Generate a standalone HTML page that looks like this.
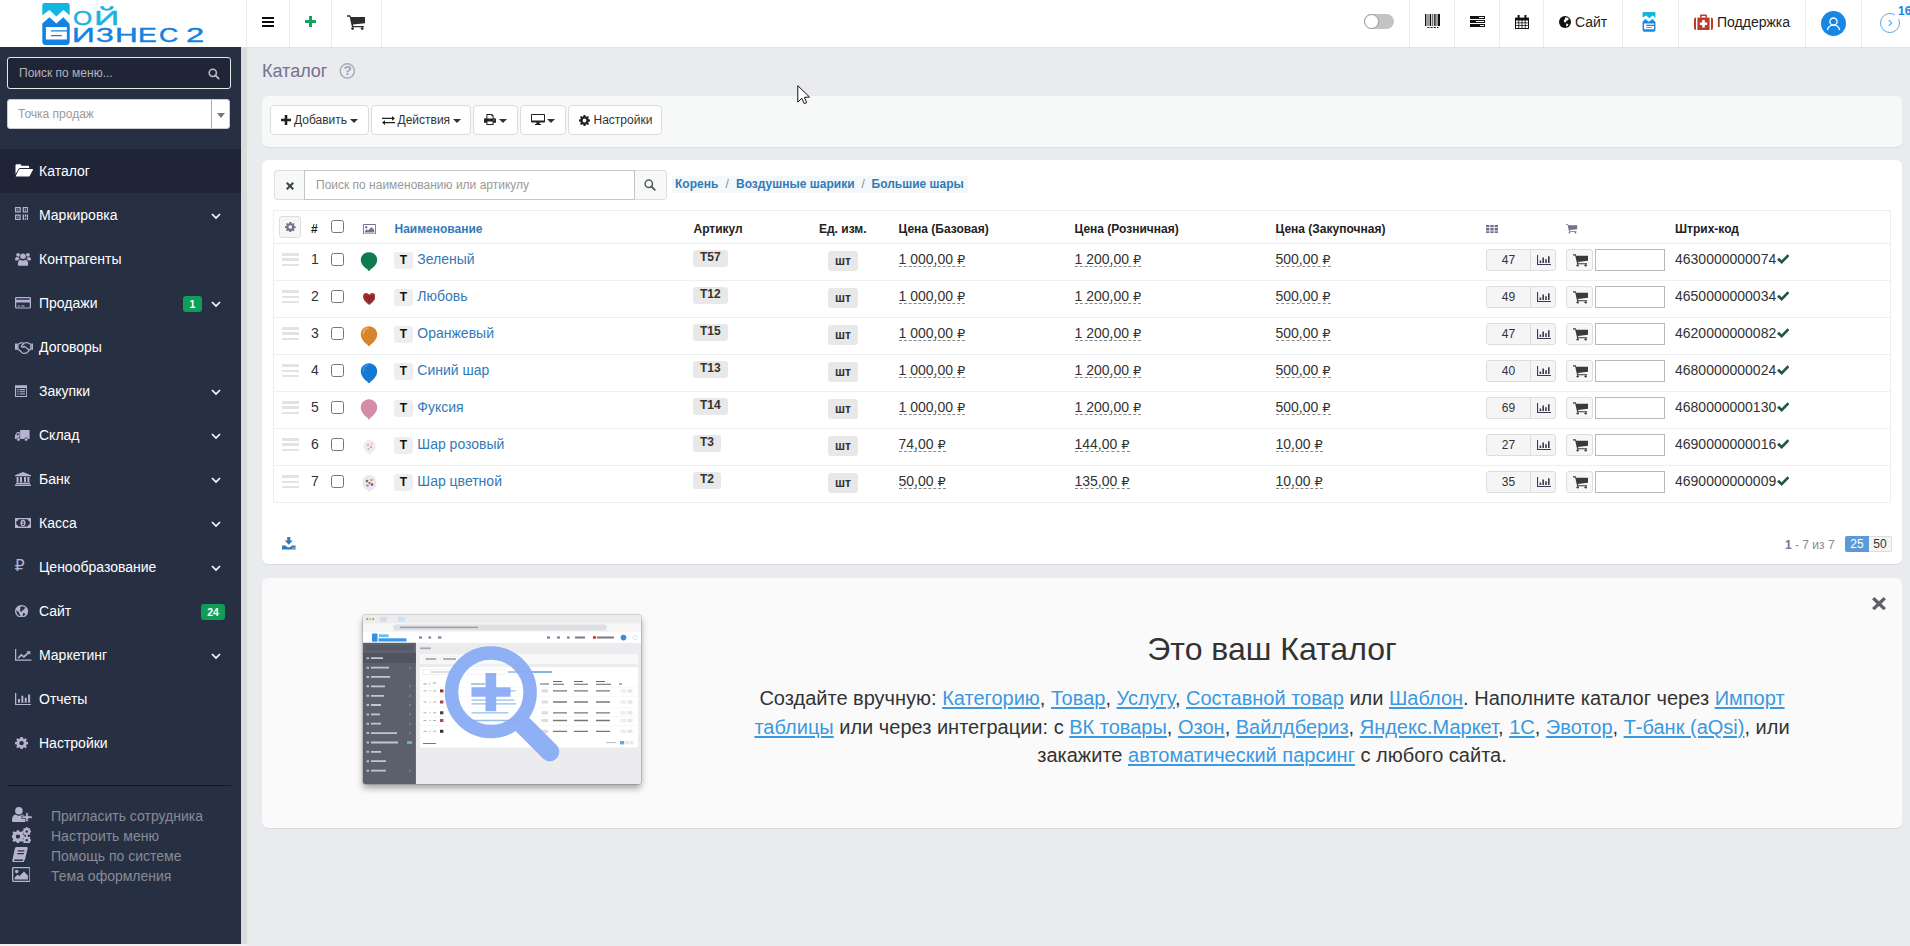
<!DOCTYPE html>
<html lang="ru">
<head>
<meta charset="utf-8">
<title>Каталог</title>
<style>
*{box-sizing:border-box;margin:0;padding:0}
html,body{width:1910px;height:946px;overflow:hidden}
body{font-family:"Liberation Sans",Arial,sans-serif;font-size:14px;color:#333;background:#e9ebee;position:relative}
a{color:#337ab7;text-decoration:none}
.abs{position:absolute}
svg{display:block}

/* ---------- top bar ---------- */
#topbar{position:absolute;left:0;top:0;width:1910px;height:48px;background:#fff;border-bottom:1px solid #e2e3e5}
.tdiv{position:absolute;top:0;width:1px;height:47px;background:#ebebeb}
.ttext{position:absolute;top:13px;font-size:14px;color:#222;line-height:18px;white-space:nowrap}

.lg{font-size:20px;line-height:24px;white-space:nowrap;transform-origin:0 0}
.lg{-webkit-text-stroke:0.4px currentColor}
.l1{top:5.7px;font-size:21px;color:#19b3e1}
.l2{top:23px;font-size:19.5px;color:#1482e0}
/* ---------- sidebar ---------- */
#sidebar{position:absolute;left:0;top:47px;width:241px;height:897px;background:#272f43}
#sbstrip{position:absolute;left:241px;top:47px;width:6px;height:899px;background:#dcdcdc}
#sbbottom{position:absolute;left:0;top:944px;width:247px;height:2px;background:#f0f0f0}
#msearch{position:absolute;left:7px;top:10px;width:224px;height:32px;border:1px solid #e8e9ec;border-radius:3px;background:#1f2437;color:#b3b5bd;font-size:12px;line-height:30px;padding-left:11px}
#msel{position:absolute;left:7px;top:52px;width:223px;height:30px;border:1px solid #ccc;border-radius:3px;background:#fff;color:#9a9a9a;font-size:12px;line-height:28px;padding-left:10px}
#msel i{position:absolute;left:203px;top:0;width:1px;height:28px;background:#aaa}
#msel b{position:absolute;left:209px;top:13px;border:4px solid transparent;border-top:5px solid #777;border-bottom:0}
.mi{position:absolute;left:0;width:241px;height:44px;color:#fff;font-size:14px;line-height:44px;padding-left:39px;white-space:nowrap}
.rub{font-family:"DejaVu Sans",sans-serif}
.mi.act{background:#1f2437}
.mi svg{position:absolute;left:13px;top:14px}
.mi .chev{position:absolute;left:210.5px;top:19.5px}
.badge{position:absolute;top:15px;height:16px;border-radius:3px;background:#119d57;color:#fff;font-size:10.5px;font-weight:bold;line-height:16px;text-align:center}
#sbhr{position:absolute;left:7px;top:738px;width:224px;height:1px;background:#141824}
.bl{position:absolute;left:51px;color:#888b94;font-size:14px;line-height:20px;white-space:nowrap}
.bli{position:absolute;left:12px}

/* ---------- main ---------- */
#title{position:absolute;left:262px;top:60px;font-size:18px;line-height:22px;color:#77718f}
.panel{position:absolute;left:262px;width:1640px;border-radius:6px}
#p1{top:96.400px;height:51px;background:#f7f9f9;box-shadow:0 1px 1px rgba(0,0,0,.07)}
#p2{top:160.200px;height:403.800px;background:#fff;box-shadow:0 1px 1px rgba(0,0,0,.07)}
#p3{top:577.700px;height:250.600px;background:#fafafa;box-shadow:0 1px 1px rgba(0,0,0,.07)}
.btn{position:absolute;top:105px;height:30px;border:1px solid #dcdcdc;border-radius:4px;background:#fff;color:#333;font-size:12px;line-height:28px;white-space:nowrap}
.caret{position:absolute;top:13px;border:4px solid transparent;border-top:4px solid #333;border-bottom:0}

.bc{background:#f3f8fb;font-size:12px;font-weight:bold;line-height:17px}
.bc a,.bc span{position:absolute;top:0;white-space:nowrap}
.bc span{color:#8a8a8a;font-weight:normal}
.th{position:absolute;top:221px;font-size:12px;font-weight:bold;line-height:16px;color:#222;white-space:nowrap}
.td{position:absolute;font-size:14px;line-height:20px;color:#333;white-space:nowrap}
a.td{color:#337ab7}
.cb{position:absolute;left:331px;width:13px;height:13px;border:1px solid #767676;border-radius:2.500px;background:#fff}
.dh{left:282px;width:17px;height:14px;background:linear-gradient(#e1e3e6 0,#e1e3e6 2.600px,transparent 2.600px,transparent 5.500px,#e1e3e6 5.500px,#e1e3e6 8.200px,transparent 8.200px,transparent 10.800px,#e1e3e6 10.800px,#e1e3e6 13.400px,transparent 13.400px)}
.tb{width:19px;height:17px;border-radius:3px;background:#eee;color:#111;font-size:12px;font-weight:bold;line-height:17px;text-align:center}
.lb{height:17px;padding:0 7px;border-radius:3px;background:#e8e8e8;color:#333;font-size:12px;font-weight:bold;line-height:15px;white-space:nowrap}
.lb.u{height:20px;line-height:20px;padding:0 7px}
.pr{border-bottom:1px dashed #888;height:18px;line-height:20px}
.pr .rub{font-size:13px}
.sg{left:1486px;width:70px;height:22px;border:1px solid #ddd;border-radius:3px;background:#f5f5f5}
.sg b{position:absolute;left:0;top:0;width:44px;height:20px;border-right:1px solid #ddd;font-weight:normal;font-size:12px;line-height:20px;text-align:center;color:#333}
.sg svg{position:absolute;left:50px;top:5px}
.cbn{left:1566px;width:26.500px;height:22px;border:1px solid #ddd;border-radius:3px;background:#f7f7f7}
.cbn svg{position:absolute;left:5.500px;top:4px}
.qi{left:1595px;width:70px;height:22px;border:1px solid #b8b8b8;background:#fff}
#thumb{box-shadow:0 4px 7px rgba(0,0,0,.36),0 0 0 .5px rgba(0,0,0,.25);border-radius:2px}
#ptxt{text-align:center;font-size:20px;line-height:28.570px;color:#333;white-space:nowrap}
#ptxt a{color:#3b99e0;text-decoration:underline;text-decoration-thickness:1.500px;text-underline-offset:2px}
</style>
</head>
<body>

<div id="topbar">
  <!-- logo -->
  <svg class="abs" style="left:42px;top:3px" width="28" height="42" viewBox="0 0 28 42">
    <path d="M0.3 2 Q0.3 0 2.3 0 H25.7 Q27.7 0 27.7 2 V12.2 L21.4 6.9 L14.3 13.5 L7.4 6.9 L0.3 12.2 Z" fill="#14b5e1"/>
    <path d="M0.3 20.6 L7.4 14.3 L14.3 20.4 L21.4 14.3 L27.7 20.9 V38.4 Q27.7 41.9 24.2 41.9 H3.8 Q0.3 41.9 0.3 38.4 Z" fill="#1482e0"/>
    <path d="M3.9 23.9 H24.9 V27.2 H8.9 V28.5 H24.9 V36.6 H3.9 Z M8.9 32 V33.3 H19.9 V32 Z" fill="#fff" fill-rule="evenodd"/>
  </svg>
  <div class="abs lg l1" style="left:72.6px;transform:scaleX(1.179)">О</div><div class="abs lg l1" style="left:94.2px;transform:scaleX(1.678)">Й</div>
  <div class="abs lg l2" style="left:71.8px;transform:scaleX(1.618)">И</div><div class="abs lg l2" style="left:95.9px;transform:scaleX(1.508)">З</div><div class="abs lg l2" style="left:115.1px;transform:scaleX(1.613)">Н</div><div class="abs lg l2" style="left:138.4px;transform:scaleX(1.444)">Е</div><div class="abs lg l2" style="left:158.7px;transform:scaleX(1.368)">С</div><div class="abs lg l2" style="left:185.8px;transform:scaleX(1.675)">2</div>

  <i class="tdiv" style="left:246px"></i><i class="tdiv" style="left:289px"></i><i class="tdiv" style="left:331px"></i><i class="tdiv" style="left:381px"></i>
  <!-- hamburger -->
  <svg class="abs" style="left:262px;top:16px" width="12" height="12" viewBox="0 0 12 12"><path d="M0 1h12v2H0zM0 5h12v2H0zM0 9h12v2H0z" fill="#0a0a0a"/></svg>
  <!-- plus -->
  <svg class="abs" style="left:305px;top:16px" width="11" height="11" viewBox="0 0 11 11"><path d="M4 0h3v4h4v3H7v4H4V7H0V4h4z" fill="#12a45c"/></svg>
  <!-- cart -->
  <svg class="abs" style="left:347px;top:15px" width="18" height="15" viewBox="0 0 18 15"><path d="M0 0.3h3.2l0.8 1.7h14v6.2l-12 1.4 0.3 1.4h10.5v1.3H5l-2.4-10.6H0z" fill="#2d2d2d"/><circle cx="5.6" cy="13.6" r="1.4" fill="#2d2d2d"/><circle cx="15.2" cy="13.6" r="1.4" fill="#2d2d2d"/></svg>

  <!-- toggle -->
  <div class="abs" style="left:1364px;top:14px;width:30px;height:15px;border-radius:8px;background:#c4c3c2"></div>
  <div class="abs" style="left:1364px;top:14px;width:15px;height:15px;border-radius:8px;background:#fff;border:1px solid #999"></div>

  <i class="tdiv" style="left:1409px"></i><i class="tdiv" style="left:1454px"></i><i class="tdiv" style="left:1499px"></i><i class="tdiv" style="left:1543px"></i><i class="tdiv" style="left:1622px"></i><i class="tdiv" style="left:1678px"></i><i class="tdiv" style="left:1805px"></i><i class="tdiv" style="left:1861px"></i>

  <!-- barcode -->
  <svg class="abs" style="left:1425px;top:14px" width="15" height="14" viewBox="0 0 15 14"><path d="M0 0h1.4v12H0zM2.6 0h0.8v12h-0.8zM4.6 0h1.6v12H4.6zM7.4 0h0.8v12h-0.8zM9.2 0h1.4v12H9.2zM11.6 0h0.8v12h-0.8zM13 0h2v12h-2zM2.4 13h2v1h-2zM5.6 13h2v1h-2zM8.8 13h2v1h-2zM12 13h1.4v1H12z" fill="#111"/></svg>
  <!-- tasks -->
  <svg class="abs" style="left:1470px;top:16px" width="15" height="11" viewBox="0 0 15 11"><path d="M0 0h15v3H0zM0 4h15v3H0zM0 8h15v3H0z" fill="#111"/><path d="M9 1h5v1H9zM6 5h8v1H6zM10 9h4v1h-4z" fill="#fff"/></svg>
  <!-- calendar -->
  <svg class="abs" style="left:1515px;top:15px" width="14" height="14" viewBox="0 0 14 14"><path d="M0 2.6h14v11.4H0z" fill="#111"/><path d="M2.6 0h2v3.6h-2zM9.4 0h2v3.6h-2z" fill="#111"/><path d="M1 5.4h2.4v2H1zM4.2 5.4h2.4v2H4.2zM7.4 5.4h2.4v2H7.4zM10.6 5.4H13v2h-2.4zM1 8.2h2.4v2H1zM4.2 8.2h2.4v2H4.2zM7.4 8.2h2.4v2H7.4zM10.6 8.2H13v2h-2.4zM1 11h2.4v2H1zM4.2 11h2.4v2H4.2zM7.4 11h2.4v2H7.4zM10.6 11H13v2h-2.4z" fill="#fff"/></svg>
  <!-- globe -->
  <svg class="abs" style="left:1559px;top:16px" width="12" height="12" viewBox="0 0 12 12"><circle cx="6" cy="6" r="6" fill="#111"/><path d="M6.4 1.2c1.6 0 3 .8 3.8 2l-1 .2-.6 1.2-1.4.4-.4 1.6-1.4-.4-.6-1.4.8-1.4zM7.4 7.6l2 .4-.6 1.8-1.8.8z" fill="#fff"/></svg>
  <div class="ttext" style="left:1575px">Сайт</div>
  <!-- mini logo -->
  <svg class="abs" style="left:1642px;top:12px" width="14" height="20" viewBox="0 0 28 42">
    <path d="M0.5 2.2 Q0.5 0.2 2.5 0.2 H25.5 Q27.5 0.2 27.5 2.2 V12.3 L21.8 7.6 L14.6 13.2 L8.2 7.2 L0.5 11.6 Z" fill="#14b5e1"/>
    <path d="M0.5 20.5 L6.6 14.6 L13.6 20.6 L21.2 14.6 L27.5 20.8 V38 Q27.5 41.4 24 41.4 H4 Q0.5 41.4 0.5 38 Z" fill="#1687e4"/>
    <path d="M3.6 24.2 H24.4 V27 H8 V29.6 H24.4 V36.2 H3.6 Z M8 32.2 V33.6 H20 V32.2 Z" fill="#fff" fill-rule="evenodd"/>
  </svg>
  <!-- medkit -->
  <svg class="abs" style="left:1694px;top:14px" width="19" height="16" viewBox="0 0 19 16"><path d="M0 5.4Q0 3.6 1.8 3.6H2v12.4H1.8Q0 16 0 14.2zM3.4 3.6h12.2V16H3.4zM17 3.6h.2q1.800 0 1.800 1.800v8.800q0 1.800-1.800 1.800H17z" fill="#c0392b"/><path d="M6 3.6V1.600Q6 .4 7.200.4h4.600q1.200 0 1.200 1.200v2h-1.600V2H7.600v1.600z" fill="#c0392b"/><path d="M8.200 6h2.600v2.400h2.400V11h-2.400v2.400H8.200V11H5.800V8.400h2.400z" fill="#fff"/></svg>
  <div class="ttext" style="left:1717px">Поддержка</div>
  <!-- user -->
  <div class="abs" style="left:1821px;top:11px;width:25px;height:25px;border-radius:13px;background:#1687e4"></div>
  <svg class="abs" style="left:1821px;top:11px" width="25" height="25" viewBox="0 0 25 25"><circle cx="12.5" cy="10.600" r="3.600" fill="none" stroke="#fff" stroke-width="1.300"/><path d="M6.400 19.200c.6-3 2.800-5 6.100-5s5.500 2 6.100 5" fill="none" stroke="#fff" stroke-width="1.300"/></svg>
  <!-- circle arrow -->
  <svg class="abs" style="left:1879px;top:12px" width="22" height="22" viewBox="0 0 22 22"><circle cx="11" cy="11" r="9.500" fill="none" stroke="#5aa8ea" stroke-width="1"/><path d="M9.800 8.200l2.800 2.800-2.800 2.800" fill="none" stroke="#5aa8ea" stroke-width="1.100"/></svg>
  <div class="abs" style="left:1895px;top:1px;width:15px;height:18px;background:#fff"></div>
  <div class="abs" style="left:1898px;top:4px;font-size:12px;font-weight:bold;color:#1687e4;line-height:14px">16</div>
</div>

<div id="sidebar">
  <div id="msearch">Поиск по меню...<svg class="abs" style="left:199.500px;top:9.500px" width="12" height="12" viewBox="0 0 12 12"><circle cx="4.800" cy="4.800" r="3.600" fill="none" stroke="#b9bbc4" stroke-width="1.600"/><path d="M7.400 7.400l3.300 3.300" stroke="#b9bbc4" stroke-width="1.800" stroke-linecap="round"/></svg></div>
  <div id="msel">Точка продаж<i></i><b></b></div>
  <div class="mi act" style="top:102px"><svg preserveAspectRatio="none" style="left:14.5px;top:15px" width="18.5" height="13.2" viewBox="0 0 19 14"><path d="M0.5 11V1.500Q0.500.3 1.700.3H5.400Q6.400.3 6.400 1.300V1.900H13.400Q14.600 1.900 14.600 3.100V4.200H5.200Q4.200 4.200 3.600 5.200Z" fill="#fff"/><path d="M4.900 5.200H18.200Q19 5.200 18.500 6L15.200 12.400Q14.700 13.400 13.600 13.400H1.200Q.4 13.400.9 12.600L4 6Q4.400 5.200 4.900 5.200Z" fill="#fff"/></svg>Каталог</div>
  <div class="mi " style="top:146px"><svg preserveAspectRatio="none" style="left:14.6px;top:14px" width="13.4" height="13" viewBox="0 0 14 14"><path fill-rule="evenodd" d="M0 0h6v6H0zM1.300 1.300v3.400h3.400V1.300zM2.300 2.300h1.400v1.400H2.300zM8 0h6v6H8zM9.300 1.300v3.400h3.400V1.300zM10.300 2.300h1.400v1.400h-1.400zM0 8h6v6H0zM1.300 9.300v3.400h3.400V9.300zM2.300 10.300h1.400v1.400H2.300zM8 8h1.600v6H8zM10.400 8h1.400v2.600h-1.400zM12.400 8H14v6h-1.600zM10.400 12h1.400v2h-1.400z" fill="#b5b3cf"/></svg>Маркировка<svg class="chev" width="10" height="7" viewBox="0 0 10 7"><path d="M1 1l4 4 4-4" fill="none" stroke="#fff" stroke-width="1.600"/></svg></div>
  <div class="mi " style="top:190px"><svg preserveAspectRatio="none" style="left:14.6px;top:15.1px" width="16" height="14" viewBox="0 0 17 15"><circle cx="8.500" cy="4.600" r="3" fill="#b5b3cf"/><circle cx="3.300" cy="3" r="2" fill="#b5b3cf"/><circle cx="13.700" cy="3" r="2" fill="#b5b3cf"/><path d="M3.800 14.600Q3 14.600 3 13.400Q3 8.400 6 8.200Q7.200 9.200 8.500 9.200T11 8.200Q14 8.400 14 13.400Q14 14.600 13.200 14.600Z" fill="#b5b3cf"/><path d="M0 8.400Q0 5.600 1.800 5.400Q2.800 6.200 4.200 5.800Q4.400 6.800 5 7.400Q3.400 7.600 2.800 9H1Q0 9 0 8.400ZM17 8.400Q17 5.600 15.200 5.400Q14.200 6.200 12.800 5.800Q12.600 6.800 12 7.400Q13.600 7.600 14.200 9H16Q17 9 17 8.400Z" fill="#b5b3cf"/></svg>Контрагенты</div>
  <div class="mi " style="top:234px"><svg preserveAspectRatio="none" style="left:14.6px;top:16.1px" width="16" height="11.6" viewBox="0 0 16 13"><path fill-rule="evenodd" d="M1.400 0H14.600Q16 0 16 1.400V11.600Q16 13 14.600 13H1.400Q0 13 0 11.600V1.400Q0 0 1.400 0ZM1.300 1.300V3.200H14.700V1.300ZM1.300 6.200V11.700H14.700V6.200ZM2.600 9.400H5V10.600H2.600ZM6 9.400H9.600V10.600H6Z" fill="#b5b3cf"/></svg>Продажи<span class="badge" style="left:183px;width:19px">1</span><svg class="chev" width="10" height="7" viewBox="0 0 10 7"><path d="M1 1l4 4 4-4" fill="none" stroke="#fff" stroke-width="1.600"/></svg></div>
  <div class="mi " style="top:278px"><svg preserveAspectRatio="none" style="left:14.6px;top:17px" width="18.8" height="12" viewBox="0 0 19 13"><path d="M0 1.600H2.400V8.400H0ZM16.600 1.600H19V8.400H16.600Z" fill="#b5b3cf"/><path d="M3 2.400L5.400 1Q6.400.6 7.400 1L8.800 1.600L10.600.8Q11.600.4 12.600.8L16 2.400V8L14.600 8.400L14 9.800Q13.600 10.600 12.800 10.600L12 11.600Q11.200 12.400 10.400 11.800L9.600 12.400Q8.600 12.800 7.800 12L3.800 8.400H3Z" fill="none" stroke="#b5b3cf" stroke-width="1.300" stroke-linejoin="round"/><path d="M8.800 1.800L6.600 4.200Q6.200 5.200 7.200 5.600Q8.400 5.800 9.400 4.600L14.400 8.600" fill="none" stroke="#b5b3cf" stroke-width="1.300"/></svg>Договоры</div>
  <div class="mi " style="top:322px"><svg preserveAspectRatio="none" style="left:15px;top:16px" width="12.3" height="12" viewBox="0 0 14 14"><path fill-rule="evenodd" d="M0 .4H14V14H0ZM1.300 3.400V12.700H12.700V3.400ZM2.600 4.800H4.200V6H2.600ZM5.200 4.800H11.400V6H5.200ZM2.600 7.400H4.200V8.600H2.600ZM5.200 7.400H11.400V8.600H5.200ZM2.600 10H4.200V11.200H2.600ZM5.200 10H11.400V11.200H5.200Z" fill="#b5b3cf"/></svg>Закупки<svg class="chev" width="10" height="7" viewBox="0 0 10 7"><path d="M1 1l4 4 4-4" fill="none" stroke="#fff" stroke-width="1.600"/></svg></div>
  <div class="mi " style="top:366px"><svg preserveAspectRatio="none" style="left:15px;top:16.6px" width="14.6" height="11.4" viewBox="0 0 16 12"><path d="M5.600 0H15.400Q16 0 16 .6V9.400H5.600ZM0 9.400V5.400L2.200 2.400Q2.600 2 3.200 2H5V9.400ZM1.400 5.400H3.800V3.200H3Z" fill-rule="evenodd" fill="#b5b3cf"/><circle cx="3.800" cy="10" r="1.900" fill="#b5b3cf" stroke="#272f43" stroke-width=".7"/><circle cx="12.200" cy="10" r="1.900" fill="#b5b3cf" stroke="#272f43" stroke-width=".7"/></svg>Склад<svg class="chev" width="10" height="7" viewBox="0 0 10 7"><path d="M1 1l4 4 4-4" fill="none" stroke="#fff" stroke-width="1.600"/></svg></div>
  <div class="mi " style="top:410px"><svg preserveAspectRatio="none" style="left:14.6px;top:14.9px" width="16" height="14" viewBox="0 0 16 15"><path d="M8 0L16 3.400V4.600H0V3.400ZM1.600 5.400H3.600V11H1.600ZM5 5.400H7V11H5ZM9 5.400H11V11H9ZM12.400 5.400H14.400V11H12.400ZM1 11.600H15V12.800H1ZM0 13.400H16V15H0Z" fill="#b5b3cf"/></svg>Банк<svg class="chev" width="10" height="7" viewBox="0 0 10 7"><path d="M1 1l4 4 4-4" fill="none" stroke="#fff" stroke-width="1.600"/></svg></div>
  <div class="mi " style="top:454px"><svg preserveAspectRatio="none" style="left:14.6px;top:17.1px" width="16" height="9.9" viewBox="0 0 16 10"><path fill-rule="evenodd" d="M0 0H16V10H0ZM1.300 3.400V6.600Q3.200 6.800 3.400 8.700H12.600Q12.800 6.800 14.700 6.600V3.400Q12.800 3.200 12.600 1.300H3.400Q3.200 3.200 1.300 3.400ZM8 1.800Q10.600 1.800 10.600 5T8 8.200T5.400 5T8 1.800ZM7.200 3.600V4.200H7.800V6.400H7V7H9.200V6.400H8.600V3.200H8Z" fill="#b5b3cf"/></svg>Касса<svg class="chev" width="10" height="7" viewBox="0 0 10 7"><path d="M1 1l4 4 4-4" fill="none" stroke="#fff" stroke-width="1.600"/></svg></div>
  <div class="mi " style="top:498px"><span class="rub" style="position:absolute;left:14px;top:-1px;left:14.5px;color:#b5b3cf;font-size:16px">₽</span>Ценообразование<svg class="chev" width="10" height="7" viewBox="0 0 10 7"><path d="M1 1l4 4 4-4" fill="none" stroke="#fff" stroke-width="1.600"/></svg></div>
  <div class="mi " style="top:542px"><svg preserveAspectRatio="none" style="left:14.6px;top:15.7px" width="13.1" height="12.7" viewBox="0 0 13 13"><circle cx="6.500" cy="6.500" r="6.500" fill="#b5b3cf"/><path d="M6.800 1.200Q9 1.200 10.600 3L9.600 3.400L9 4.800L7.400 5.200L7 7L5.400 6.600L4.800 5L5.600 3.400L5 2.400ZM8 8.200L10.200 8.600L9.600 10.600L7.600 11.400ZM1.400 5L2.600 6.600L3.800 7L4.200 9L5.400 10.400L5 11.600Q2 10.400 1.400 7.400Z" fill="#272f43"/></svg>Сайт<span class="badge" style="left:201px;width:24px">24</span></div>
  <div class="mi " style="top:586px"><svg preserveAspectRatio="none" style="left:15px;top:16.1px" width="16.5" height="11.7" viewBox="0 0 17 13"><path d="M0 0H1.300V11.700H17V13H0Z" fill="#b5b3cf"/><path d="M2.600 9.600L6.400 5.400L9 7.600L13 3.600L11.600 2.400H15.800V6.400L14.400 5L9.200 10L6.600 7.800L3.800 10.800Z" fill="#b5b3cf"/></svg>Маркетинг<svg class="chev" width="10" height="7" viewBox="0 0 10 7"><path d="M1 1l4 4 4-4" fill="none" stroke="#fff" stroke-width="1.600"/></svg></div>
  <div class="mi " style="top:630px"><svg preserveAspectRatio="none" style="left:14.6px;top:15.7px" width="16.9" height="12.1" viewBox="0 0 17 13"><path d="M0 0H1.300V11.700H17V13H0ZM3 6.400H5V10.600H3ZM6.400 3H8.400V10.600H6.400ZM9.800 5.200H11.800V10.600H9.800ZM13.200 1.600H15.200V10.600H13.200Z" fill="#b5b3cf"/></svg>Отчеты</div>
  <div class="mi " style="top:674px"><svg preserveAspectRatio="none" style="left:14.6px;top:15.9px" width="13.1" height="12.3" viewBox="0 0 14 14"><path fill-rule="evenodd" d="M5.800 0H8.200L8.600 1.800L9.800 2.300L11.400 1.300L12.700 2.600L11.700 4.200L12.200 5.400L14 5.800V8.200L12.200 8.600L11.700 9.800L12.700 11.400L11.400 12.700L9.800 11.700L8.600 12.200L8.200 14H5.800L5.400 12.200L4.200 11.700L2.600 12.700L1.300 11.400L2.300 9.800L1.800 8.600L0 8.200V5.800L1.800 5.400L2.300 4.200L1.300 2.600L2.600 1.300L4.200 2.300L5.400 1.800ZM7 4.600A2.400 2.400 0 1 0 7 9.400A2.400 2.400 0 1 0 7 4.600Z" fill="#b5b3cf"/></svg>Настройки</div>
  <div id="sbhr"></div>
  <svg class="bli" preserveAspectRatio="none" style="left:11.8px;top:760.1px" width="20.2" height="15.2" viewBox="0 0 20.200 15.200"><circle cx="6.900" cy="3.800" r="3.800" fill="#b5b3cf"/><path d="M0 13.600Q0 8.200 3.600 7.600Q5.200 8.800 6.900 8.800T10.200 7.600Q14 8.200 14 13.600Q14 15.200 12.400 15.200H1.600Q0 15.200 0 13.600Z" fill="#b5b3cf"/><path d="M13.700 5.700H16.300V8.900H20.200V11.500H16.300V14.800H13.700V11.500H9.800V8.900H13.700Z" fill="#b5b3cf" stroke="#272f43" stroke-width=".7"/></svg>
  <div class="bl" style="top:759px">Пригласить сотрудника</div>
  <svg class="bli" preserveAspectRatio="none" style="left:11.8px;top:779.6px" width="18.8" height="16.2" viewBox="0 0 18 16"><path fill-rule="evenodd" d="M4.600 3.200H6.800L7.200 4.600L8.200 5L9.500 4.200L11 5.700L10.200 7L10.600 8L12 8.400V10.600L10.600 11L10.200 12L11 13.300L9.500 14.800L8.200 14L7.200 14.400L6.800 15.800H4.600L4.200 14.400L3.200 14L1.900 14.800L.4 13.300L1.200 12L.8 11L-.6 10.600V8.400L.8 8L1.200 7L.4 5.700L1.900 4.200L3.200 5L4.200 4.600ZM5.700 7.400A2.100 2.100 0 1 0 5.700 11.600A2.100 2.100 0 1 0 5.700 7.400Z" fill="#b5b3cf"/><path fill-rule="evenodd" d="M13.400 0H14.800L15 1L15.800 1.400L16.700.9L17.600 1.900L17 2.800L17.300 3.500L18.300 3.800V5.200L17.300 5.400L17 6.200L17.600 7L16.700 8L15.800 7.500L15 7.800L14.800 8.800H13.400L13.200 7.800L12.400 7.500L11.500 8L10.600 7L11.200 6.200L10.900 5.400L9.900 5.200V3.800L10.900 3.500L11.200 2.800L10.600 1.900L11.500.9L12.400 1.400L13.200 1ZM14.100 3.200A1.200 1.200 0 1 0 14.100 5.600A1.200 1.200 0 1 0 14.100 3.200Z" fill="#b5b3cf"/><path fill-rule="evenodd" d="M13.400 8.600H14.800L15 9.600L15.800 10L16.700 9.500L17.600 10.500L17 11.400L17.300 12.100L18.300 12.400V13.800L17.300 14L17 14.800L17.600 15.600L16.700 16.600L15.800 16.100L15 16.400L14.800 17.400H13.400L13.200 16.400L12.400 16.100L11.500 16.600L10.600 15.600L11.200 14.800L10.900 14L9.900 13.800V12.400L10.900 12.100L11.200 11.400L10.600 10.500L11.500 9.500L12.400 10L13.200 9.600ZM14.100 11.800A1.200 1.200 0 1 0 14.100 14.200A1.200 1.200 0 1 0 14.100 11.800Z" fill="#b5b3cf"/></svg>
  <div class="bl" style="top:779px">Настроить меню</div>
  <svg class="bli" preserveAspectRatio="none" style="left:11.8px;top:800px" width="16" height="15.3" viewBox="0 0 17 14"><path fill-rule="evenodd" d="M4.600 0H15.600Q17 0 16.600 1.400L14 11Q13.600 12.400 12.200 12.400H13L12.600 14H2Q0 14 .4 12L3 1.600Q3.400 0 4.600 0ZM6.400 3L6 4.200H13L13.400 3ZM5.800 5.400L5.400 6.600H12.400L12.800 5.400ZM2.400 11.400Q1.800 12.800 3 12.800H11.400L11.800 11.400Z" fill="#b5b3cf"/></svg>
  <div class="bl" style="top:799px">Помощь по системе</div>
  <svg class="bli" preserveAspectRatio="none" style="left:11.8px;top:820px" width="18.6" height="15" viewBox="0 0 18 15"><path fill-rule="evenodd" d="M1.400 0H16.600Q18 0 18 1.400V13.600Q18 15 16.600 15H1.400Q0 15 0 13.600V1.400Q0 0 1.400 0ZM1.300 1.300V13.700H16.700V1.300ZM4.600 2.800A1.700 1.700 0 1 0 4.600 6.200A1.700 1.700 0 1 0 4.600 2.800ZM2.600 12.400V10.400L5.400 7.600L7 9.200L11.600 4.600L15.400 8.400V12.400Z" fill="#b5b3cf"/></svg>
  <div class="bl" style="top:819px">Тема оформления</div>
</div>
<div id="sbstrip"></div>
<div id="sbbottom"></div>

<div id="title">Каталог</div>
<svg class="abs" style="left:339px;top:62.500px" width="16" height="16" viewBox="0 0 16 16"><circle cx="8.300" cy="7.900" r="7.100" fill="none" stroke="#aaa9b5" stroke-width="1.400"/></svg>
<div class="abs" style="left:339.500px;top:62.800px;width:16px;height:16px;text-align:center;font-size:13.500px;line-height:16px;color:#a29fb6;font-weight:bold">?</div>
<div class="panel" id="p1"></div>
<div class="btn" style="left:270px;width:99px"><svg class="abs" style="left:10px;top:8.700px" width="10" height="10" viewBox="0 0 10 10"><path d="M3.700 0h2.600v3.700H10v2.600H6.300V10H3.700V6.300H0V3.700h3.700z" fill="#222"/></svg><span style="position:absolute;left:23px;top:0">Добавить</span><i class="caret" style="left:79px"></i></div>
<div class="btn" style="left:371px;width:100px"><svg class="abs" style="left:10px;top:10px" width="13" height="9" viewBox="0 0 13 9"><path d="M0 1.800H10V0L13 2.400L10 4.800V3H0ZM13 6H3V4.200L0 6.600L3 9V7.200H13Z" fill="#222"/></svg><span style="position:absolute;left:25.500px;top:0">Действия</span><i class="caret" style="left:81px"></i></div>
<div class="btn" style="left:473px;width:45px"><svg class="abs" style="left:10px;top:8px" width="12" height="11" viewBox="0 0 12 11"><path fill-rule="evenodd" d="M2.400 0H8L9.600 1.600V4.200H10.800Q12 4.200 12 5.400V8.800H9.600V11H2.400V8.800H0V5.400Q0 4.200 1.200 4.200H2.400ZM3.400 1V4.600H8.600V2.200H7.400V1ZM3.400 7.400V10H8.600V7.400ZM10 5.400A.5.500 0 1 0 10 6.400A.5.500 0 1 0 10 5.400Z" fill="#222"/></svg><i class="caret" style="left:24.500px"></i></div>
<div class="btn" style="left:520px;width:46px"><svg class="abs" style="left:10px;top:8px" width="14" height="11" viewBox="0 0 14 11"><path fill-rule="evenodd" d="M.8 0H13.200Q14 0 14 .8V7.800Q14 8.600 13.200 8.600H8.400L8.800 10H10V11H4V10H5.200L5.600 8.600H.8Q0 8.600 0 7.800V.8Q0 0 .8 0ZM1 1V6.600H13V1Z" fill="#222"/></svg><i class="caret" style="left:25.500px"></i></div>
<div class="btn" style="left:568px;width:94px"><svg class="abs" style="left:10px;top:9px" width="11" height="11" viewBox="0 0 14 14"><path fill-rule="evenodd" d="M5.8 0H8.2L8.6 1.800L9.800 2.300L11.400 1.300L12.700 2.600L11.700 4.200L12.200 5.400L14 5.800V8.200L12.200 8.600L11.700 9.800L12.700 11.400L11.400 12.700L9.800 11.700L8.600 12.200L8.200 14H5.800L5.400 12.200L4.200 11.700L2.600 12.700L1.300 11.400L2.300 9.800L1.800 8.600L0 8.200V5.800L1.800 5.400L2.300 4.200L1.300 2.600L2.600 1.300L4.200 2.300L5.400 1.800ZM7 4.600A2.400 2.400 0 1 0 7 9.400A2.400 2.400 0 1 0 7 4.600Z" fill="#222"/></svg><span style="position:absolute;left:24.500px;top:0">Настройки</span></div>
<div class="panel" id="p2"></div>
<div class="abs" style="left:274px;top:170px;width:31px;height:30px;border:1px solid #dedede;border-right:0;border-radius:4px 0 0 4px;background:#f7f9f9"></div>
<svg class="abs" style="left:285.500px;top:181.500px" width="8" height="8" viewBox="0 0 8 8"><path d="M1.500 0L4 2.500L6.500 0L8 1.500L5.500 4L8 6.500L6.500 8L4 5.500L1.500 8L0 6.500L2.500 4L0 1.500Z" fill="#444"/></svg>
<div class="abs" style="left:634px;top:170px;width:32.500px;height:30px;border:1px solid #dedede;border-left:0;border-radius:0 4px 4px 0;background:#f7f9f9"></div>
<div class="abs" style="left:304px;top:170px;width:331px;height:30px;border:1px solid #c4c4c4;background:#fff;color:#999;font-size:12px;line-height:28px;padding-left:11px">Поиск по наименованию или артикулу</div>
<svg class="abs" style="left:644px;top:179px" width="12" height="12" viewBox="0 0 12 12"><circle cx="4.800" cy="4.800" r="3.700" fill="none" stroke="#5a5a5a" stroke-width="1.500"/><path d="M7.500 7.500l3.300 3.300" stroke="#5a5a5a" stroke-width="1.800" stroke-linecap="round"/></svg>
<div class="abs bc" style="left:672px;top:176px;width:296px;height:17px"><a style="left:3px">Корень</a><span style="left:53.500px">/</span><a style="left:64px">Воздушные шарики</a><span style="left:189.500px">/</span><a style="left:199.500px">Большие шары</a></div>
<div class="abs" style="left:273px;top:210px;width:1618px;height:293px;border:1px solid #eeeff0"></div>
<div class="abs" style="left:279px;top:216px;width:22px;height:22px;border:1px solid #ddd;border-radius:3px;background:#f5f7f7"></div>
<svg class="abs" style="left:285px;top:221.500px" width="10.600" height="10.200" viewBox="0 0 14 14" preserveAspectRatio="none"><path fill-rule="evenodd" d="M5.8 0H8.2L8.6 1.800L9.800 2.300L11.400 1.300L12.700 2.600L11.700 4.200L12.200 5.400L14 5.800V8.200L12.200 8.600L11.700 9.800L12.700 11.400L11.400 12.700L9.800 11.700L8.600 12.200L8.200 14H5.800L5.400 12.200L4.200 11.700L2.600 12.700L1.300 11.400L2.300 9.800L1.800 8.600L0 8.200V5.800L1.800 5.400L2.300 4.200L1.300 2.600L2.600 1.300L4.200 2.300L5.400 1.800ZM7 4.600A2.400 2.400 0 1 0 7 9.400A2.400 2.400 0 1 0 7 4.600Z" fill="#77718f"/></svg>
<div class="th" style="left:311px">#</div>
<i class="cb" style="top:220px"></i>
<svg class="abs" style="left:363px;top:223.500px" width="13" height="10.500" viewBox="0 0 13 10.500"><path fill-rule="evenodd" d="M.8 0H12.200Q13 0 13 .8V9.700Q13 10.500 12.200 10.500H.8Q0 10.500 0 9.700V.8Q0 0 .8 0ZM.9.900V9.600H12.100V.9ZM3.200 2A1.200 1.200 0 1 0 3.200 4.400A1.200 1.200 0 1 0 3.200 2ZM1.800 8.600V7.200L3.800 5.200L5 6.400L8.400 3L11.200 5.800V8.600Z" fill="#77718f"/></svg>
<div class="th" style="left:394.500px;color:#337ab7">Наименование</div>
<div class="th" style="left:693.500px">Артикул</div>
<div class="th" style="left:819px">Ед. изм.</div>
<div class="th" style="left:898.500px">Цена (Базовая)</div>
<div class="th" style="left:1074.500px">Цена (Розничная)</div>
<div class="th" style="left:1275.500px">Цена (Закупочная)</div>
<svg class="abs" style="left:1486px;top:224.500px" width="12" height="8.500" viewBox="0 0 12 8.500"><path d="M0 0h3.400v2.300H0zM4.300 0h3.400v2.300H4.300zM8.600 0H12v2.300H8.600zM0 3.100h3.400v2.300H0zM4.300 3.100h3.400v2.300H4.300zM8.600 3.100H12v2.300H8.600zM0 6.200h3.400v2.300H0zM4.300 6.200h3.400v2.300H4.300zM8.600 6.200H12v2.300H8.600z" fill="#77718f"/></svg>
<svg class="abs" style="left:1566px;top:224.300px" width="11.500" height="9.500" viewBox="0 0 18.500 15" preserveAspectRatio="none"><path d="M0 .3h3.200l.8 1.700h14v6.200l-12 1.400.3 1.400h10.500v1.300H5L2.600 1.700H0z" fill="#77718f"/><circle cx="5.600" cy="13.600" r="1.400" fill="#77718f"/><circle cx="15.200" cy="13.600" r="1.400" fill="#77718f"/></svg>
<div class="th" style="left:1675px">Штрих-код</div>
<div class="abs" style="left:274px;top:243px;width:1616px;height:1px;background:#e9eaeb"></div>
<!-- row 1 -->
<div class="abs dh" style="top:252.5px"></div>
<div class="td" style="left:311px;top:249px">1</div>
<i class="cb" style="top:253px"></i>
<svg class="abs" preserveAspectRatio="none" style="left:360.100px;top:252px" width="18" height="19" viewBox="0 0 18 20"><path d="M9 .3C13.800.3 17.200 3.800 17.200 8.300C17.200 12.800 12.600 17.300 9.800 18.600L10.400 19.700H7.600L8.200 18.600C5.400 17.300.8 12.800.8 8.300C.8 3.800 4.200.3 9 .3Z" fill="#0e7b50"/></svg>
<div class="abs tb" style="left:394px;top:252px">Т</div>
<a class="td" style="left:417.300px;top:249px">Зеленый</a>
<div class="abs lb" style="left:693px;top:249.5px">T57</div>
<div class="abs lb u" style="left:828px;top:250.8px">шт</div>
<div class="td pr" style="left:898.5px;top:249px">1 000,00 <span class="rub">₽</span></div>
<div class="td pr" style="left:1074.5px;top:249px">1 200,00 <span class="rub">₽</span></div>
<div class="td pr" style="left:1275.5px;top:249px">500,00 <span class="rub">₽</span></div>
<div class="abs sg" style="top:249px"><b>47</b><svg width="14" height="10" viewBox="0 0 14 10"><path d="M0 0H1.100V8.900H14V10H0ZM2.600 5.600H4.200V8H2.600ZM5.400 2.400H7V8H5.400ZM8.200 4.200H9.800V8H8.200ZM11 1.200H12.600V8H11Z" fill="#3a3a50"/></svg></div>
<div class="abs cbn" style="top:249px"><svg width="15.500" height="12.500" viewBox="0 0 18.500 15" preserveAspectRatio="none"><path d="M0 .3h3.200l.8 1.700h14v6.200l-12 1.400.3 1.400h10.500v1.300H5L2.600 1.700H0z" fill="#3a3a3a"/><circle cx="5.600" cy="13.600" r="1.400" fill="#3a3a3a"/><circle cx="15.200" cy="13.600" r="1.400" fill="#3a3a3a"/></svg></div>
<div class="abs qi" style="top:249px"></div>
<div class="td" style="left:1675px;top:249px">4630000000074</div>
<svg class="abs" style="left:1776.500px;top:254.2px" width="12.500" height="10" viewBox="0 0 12.500 10"><path d="M2 3.800L4.700 6.300L10.500 .200L12.500 2.100L4.700 10L0 5.700Z" fill="#1f5a3d"/></svg>
<div class="abs" style="left:274px;top:280px;width:1616px;height:1px;background:#eeeff0"></div>
<!-- row 2 -->
<div class="abs dh" style="top:289.5px"></div>
<div class="td" style="left:311px;top:286px">2</div>
<i class="cb" style="top:290px"></i>
<svg class="abs" style="left:362.800px;top:292.800px" width="12.600" height="12" viewBox="0 0 14.500 13.500" preserveAspectRatio="none"><path d="M7.250 2Q8.400 0 10.800 0Q14.500.4 14.500 4.200Q14.500 8.400 7.250 13.500Q0 8.400 0 4.200Q0 .4 3.700 0Q6.100 0 7.250 2Z" fill="#a5322b"/><path d="M7.250 4Q8.200 2.600 10.400 2.600Q12.400 3 12.200 5Q11.600 8 7.250 11Q2.900 8 2.300 5Q2.100 3 4.100 2.600Q6.300 2.600 7.250 4Z" fill="#8c2a31"/></svg>
<div class="abs tb" style="left:394px;top:289px">Т</div>
<a class="td" style="left:417.300px;top:286px">Любовь</a>
<div class="abs lb" style="left:693px;top:286.5px">T12</div>
<div class="abs lb u" style="left:828px;top:287.8px">шт</div>
<div class="td pr" style="left:898.5px;top:286px">1 000,00 <span class="rub">₽</span></div>
<div class="td pr" style="left:1074.5px;top:286px">1 200,00 <span class="rub">₽</span></div>
<div class="td pr" style="left:1275.5px;top:286px">500,00 <span class="rub">₽</span></div>
<div class="abs sg" style="top:286px"><b>49</b><svg width="14" height="10" viewBox="0 0 14 10"><path d="M0 0H1.100V8.900H14V10H0ZM2.600 5.600H4.200V8H2.600ZM5.400 2.400H7V8H5.400ZM8.200 4.200H9.800V8H8.200ZM11 1.200H12.600V8H11Z" fill="#3a3a50"/></svg></div>
<div class="abs cbn" style="top:286px"><svg width="15.500" height="12.500" viewBox="0 0 18.500 15" preserveAspectRatio="none"><path d="M0 .3h3.200l.8 1.700h14v6.200l-12 1.400.3 1.400h10.500v1.300H5L2.600 1.700H0z" fill="#3a3a3a"/><circle cx="5.600" cy="13.600" r="1.400" fill="#3a3a3a"/><circle cx="15.200" cy="13.600" r="1.400" fill="#3a3a3a"/></svg></div>
<div class="abs qi" style="top:286px"></div>
<div class="td" style="left:1675px;top:286px">4650000000034</div>
<svg class="abs" style="left:1776.500px;top:291.2px" width="12.500" height="10" viewBox="0 0 12.500 10"><path d="M2 3.800L4.700 6.300L10.500 .200L12.500 2.100L4.700 10L0 5.700Z" fill="#1f5a3d"/></svg>
<div class="abs" style="left:274px;top:317px;width:1616px;height:1px;background:#eeeff0"></div>
<!-- row 3 -->
<div class="abs dh" style="top:326.5px"></div>
<div class="td" style="left:311px;top:323px">3</div>
<i class="cb" style="top:327px"></i>
<svg class="abs" preserveAspectRatio="none" style="left:360.100px;top:325.7px" width="18" height="20.6" viewBox="0 0 18 20"><path d="M9 .3C13.800.3 17.200 3.800 17.200 8.300C17.200 12.800 12.600 17.300 9.800 18.600L10.400 19.700H7.600L8.200 18.600C5.400 17.300.8 12.800.8 8.300C.8 3.800 4.200.3 9 .3Z" fill="#d6852a"/><path d="M3.400 7.600C3.400 4.600 5.400 2.600 7.800 2.200" fill="none" stroke="#eeb063" stroke-width="1.600" stroke-linecap="round"/></svg>
<div class="abs tb" style="left:394px;top:326px">Т</div>
<a class="td" style="left:417.300px;top:323px">Оранжевый</a>
<div class="abs lb" style="left:693px;top:323.5px">T15</div>
<div class="abs lb u" style="left:828px;top:324.8px">шт</div>
<div class="td pr" style="left:898.5px;top:323px">1 000,00 <span class="rub">₽</span></div>
<div class="td pr" style="left:1074.5px;top:323px">1 200,00 <span class="rub">₽</span></div>
<div class="td pr" style="left:1275.5px;top:323px">500,00 <span class="rub">₽</span></div>
<div class="abs sg" style="top:323px"><b>47</b><svg width="14" height="10" viewBox="0 0 14 10"><path d="M0 0H1.100V8.900H14V10H0ZM2.600 5.600H4.200V8H2.600ZM5.400 2.400H7V8H5.400ZM8.200 4.200H9.800V8H8.200ZM11 1.200H12.600V8H11Z" fill="#3a3a50"/></svg></div>
<div class="abs cbn" style="top:323px"><svg width="15.500" height="12.500" viewBox="0 0 18.500 15" preserveAspectRatio="none"><path d="M0 .3h3.200l.8 1.700h14v6.200l-12 1.400.3 1.400h10.500v1.300H5L2.600 1.700H0z" fill="#3a3a3a"/><circle cx="5.600" cy="13.600" r="1.400" fill="#3a3a3a"/><circle cx="15.200" cy="13.600" r="1.400" fill="#3a3a3a"/></svg></div>
<div class="abs qi" style="top:323px"></div>
<div class="td" style="left:1675px;top:323px">4620000000082</div>
<svg class="abs" style="left:1776.500px;top:328.2px" width="12.500" height="10" viewBox="0 0 12.500 10"><path d="M2 3.800L4.700 6.300L10.500 .200L12.500 2.100L4.700 10L0 5.700Z" fill="#1f5a3d"/></svg>
<div class="abs" style="left:274px;top:354px;width:1616px;height:1px;background:#eeeff0"></div>
<!-- row 4 -->
<div class="abs dh" style="top:363.5px"></div>
<div class="td" style="left:311px;top:360px">4</div>
<i class="cb" style="top:364px"></i>
<svg class="abs" preserveAspectRatio="none" style="left:360.100px;top:362.5px" width="18" height="20.6" viewBox="0 0 18 20"><path d="M9 .3C13.800.3 17.200 3.800 17.200 8.300C17.200 12.800 12.600 17.300 9.800 18.600L10.400 19.700H7.600L8.200 18.600C5.400 17.300.8 12.800.8 8.300C.8 3.800 4.200.3 9 .3Z" fill="#1479d2"/><path d="M3.400 7.600C3.400 4.600 5.400 2.600 7.800 2.200" fill="none" stroke="#3d96e4" stroke-width="1.600" stroke-linecap="round"/></svg>
<div class="abs tb" style="left:394px;top:363px">Т</div>
<a class="td" style="left:417.300px;top:360px">Синий шар</a>
<div class="abs lb" style="left:693px;top:360.5px">T13</div>
<div class="abs lb u" style="left:828px;top:361.8px">шт</div>
<div class="td pr" style="left:898.5px;top:360px">1 000,00 <span class="rub">₽</span></div>
<div class="td pr" style="left:1074.5px;top:360px">1 200,00 <span class="rub">₽</span></div>
<div class="td pr" style="left:1275.5px;top:360px">500,00 <span class="rub">₽</span></div>
<div class="abs sg" style="top:360px"><b>40</b><svg width="14" height="10" viewBox="0 0 14 10"><path d="M0 0H1.100V8.900H14V10H0ZM2.600 5.600H4.200V8H2.600ZM5.400 2.400H7V8H5.400ZM8.200 4.200H9.800V8H8.200ZM11 1.200H12.600V8H11Z" fill="#3a3a50"/></svg></div>
<div class="abs cbn" style="top:360px"><svg width="15.500" height="12.500" viewBox="0 0 18.500 15" preserveAspectRatio="none"><path d="M0 .3h3.200l.8 1.700h14v6.200l-12 1.400.3 1.400h10.500v1.300H5L2.600 1.700H0z" fill="#3a3a3a"/><circle cx="5.600" cy="13.600" r="1.400" fill="#3a3a3a"/><circle cx="15.200" cy="13.600" r="1.400" fill="#3a3a3a"/></svg></div>
<div class="abs qi" style="top:360px"></div>
<div class="td" style="left:1675px;top:360px">4680000000024</div>
<svg class="abs" style="left:1776.500px;top:365.2px" width="12.500" height="10" viewBox="0 0 12.500 10"><path d="M2 3.800L4.700 6.300L10.500 .200L12.500 2.100L4.700 10L0 5.700Z" fill="#1f5a3d"/></svg>
<div class="abs" style="left:274px;top:391px;width:1616px;height:1px;background:#eeeff0"></div>
<!-- row 5 -->
<div class="abs dh" style="top:400.5px"></div>
<div class="td" style="left:311px;top:397px">5</div>
<i class="cb" style="top:401px"></i>
<svg class="abs" preserveAspectRatio="none" style="left:360.100px;top:399.2px" width="18" height="20.6" viewBox="0 0 18 20"><path d="M9 .3C13.800.3 17.200 3.800 17.200 8.300C17.200 12.800 12.600 17.300 9.800 18.600L10.400 19.700H7.600L8.200 18.600C5.400 17.300.8 12.800.8 8.300C.8 3.800 4.200.3 9 .3Z" fill="#d58ca9"/></svg>
<div class="abs tb" style="left:394px;top:400px">Т</div>
<a class="td" style="left:417.300px;top:397px">Фуксия</a>
<div class="abs lb" style="left:693px;top:397.5px">T14</div>
<div class="abs lb u" style="left:828px;top:398.8px">шт</div>
<div class="td pr" style="left:898.5px;top:397px">1 000,00 <span class="rub">₽</span></div>
<div class="td pr" style="left:1074.5px;top:397px">1 200,00 <span class="rub">₽</span></div>
<div class="td pr" style="left:1275.5px;top:397px">500,00 <span class="rub">₽</span></div>
<div class="abs sg" style="top:397px"><b>69</b><svg width="14" height="10" viewBox="0 0 14 10"><path d="M0 0H1.100V8.900H14V10H0ZM2.600 5.600H4.200V8H2.600ZM5.400 2.400H7V8H5.400ZM8.200 4.200H9.800V8H8.200ZM11 1.200H12.600V8H11Z" fill="#3a3a50"/></svg></div>
<div class="abs cbn" style="top:397px"><svg width="15.500" height="12.500" viewBox="0 0 18.500 15" preserveAspectRatio="none"><path d="M0 .3h3.200l.8 1.700h14v6.200l-12 1.400.3 1.400h10.500v1.300H5L2.600 1.700H0z" fill="#3a3a3a"/><circle cx="5.600" cy="13.600" r="1.400" fill="#3a3a3a"/><circle cx="15.200" cy="13.600" r="1.400" fill="#3a3a3a"/></svg></div>
<div class="abs qi" style="top:397px"></div>
<div class="td" style="left:1675px;top:397px">4680000000130</div>
<svg class="abs" style="left:1776.500px;top:402.2px" width="12.500" height="10" viewBox="0 0 12.500 10"><path d="M2 3.800L4.700 6.300L10.500 .200L12.500 2.100L4.700 10L0 5.700Z" fill="#1f5a3d"/></svg>
<div class="abs" style="left:274px;top:428px;width:1616px;height:1px;background:#eeeff0"></div>
<!-- row 6 -->
<div class="abs dh" style="top:437.5px"></div>
<div class="td" style="left:311px;top:434px">6</div>
<i class="cb" style="top:438px"></i>
<svg class="abs" style="left:363px;top:440px" width="13" height="14" viewBox="0 0 13 14"><ellipse cx="6.500" cy="6.500" rx="6" ry="6.500" fill="#eeebee"/><circle cx="5" cy="5" r="1" fill="#d79bb5"/><circle cx="8" cy="7" r="1" fill="#cf8aa8"/><circle cx="5.500" cy="9" r=".9" fill="#d9a5bb"/><circle cx="8.500" cy="4" r=".8" fill="#d9a5bb"/><path d="M6.500 12.600l-1 1.400h2z" fill="#dcd8dc"/></svg>
<div class="abs tb" style="left:394px;top:437px">Т</div>
<a class="td" style="left:417.300px;top:434px">Шар розовый</a>
<div class="abs lb" style="left:693px;top:434.5px">T3</div>
<div class="abs lb u" style="left:828px;top:435.8px">шт</div>
<div class="td pr" style="left:898.5px;top:434px">74,00 <span class="rub">₽</span></div>
<div class="td pr" style="left:1074.5px;top:434px">144,00 <span class="rub">₽</span></div>
<div class="td pr" style="left:1275.5px;top:434px">10,00 <span class="rub">₽</span></div>
<div class="abs sg" style="top:434px"><b>27</b><svg width="14" height="10" viewBox="0 0 14 10"><path d="M0 0H1.100V8.900H14V10H0ZM2.600 5.600H4.200V8H2.600ZM5.400 2.400H7V8H5.400ZM8.200 4.200H9.800V8H8.200ZM11 1.200H12.600V8H11Z" fill="#3a3a50"/></svg></div>
<div class="abs cbn" style="top:434px"><svg width="15.500" height="12.500" viewBox="0 0 18.500 15" preserveAspectRatio="none"><path d="M0 .3h3.200l.8 1.700h14v6.200l-12 1.400.3 1.400h10.500v1.300H5L2.600 1.700H0z" fill="#3a3a3a"/><circle cx="5.600" cy="13.600" r="1.400" fill="#3a3a3a"/><circle cx="15.200" cy="13.600" r="1.400" fill="#3a3a3a"/></svg></div>
<div class="abs qi" style="top:434px"></div>
<div class="td" style="left:1675px;top:434px">4690000000016</div>
<svg class="abs" style="left:1776.500px;top:439.2px" width="12.500" height="10" viewBox="0 0 12.500 10"><path d="M2 3.800L4.700 6.300L10.500 .200L12.500 2.100L4.700 10L0 5.700Z" fill="#1f5a3d"/></svg>
<div class="abs" style="left:274px;top:465px;width:1616px;height:1px;background:#eeeff0"></div>
<!-- row 7 -->
<div class="abs dh" style="top:474.5px"></div>
<div class="td" style="left:311px;top:471px">7</div>
<i class="cb" style="top:475px"></i>
<svg class="abs" style="left:362px;top:475px" width="15" height="17" viewBox="0 0 15 17"><ellipse cx="7.500" cy="7.800" rx="7" ry="7.800" fill="#e9e8ea"/><circle cx="5" cy="6" r="1.300" fill="#7a6a7c"/><circle cx="9.500" cy="5" r="1.200" fill="#e0a04a"/><circle cx="10" cy="9.500" r="1.300" fill="#5a5a9a"/><circle cx="5.500" cy="10.500" r="1.200" fill="#c97a9a"/><circle cx="7.500" cy="8" r="1" fill="#b33"/><path d="M7.500 15.300l-1 1.700h2z" fill="#d5d3d6"/></svg>
<div class="abs tb" style="left:394px;top:474px">Т</div>
<a class="td" style="left:417.300px;top:471px">Шар цветной</a>
<div class="abs lb" style="left:693px;top:471.5px">T2</div>
<div class="abs lb u" style="left:828px;top:472.8px">шт</div>
<div class="td pr" style="left:898.5px;top:471px">50,00 <span class="rub">₽</span></div>
<div class="td pr" style="left:1074.5px;top:471px">135,00 <span class="rub">₽</span></div>
<div class="td pr" style="left:1275.5px;top:471px">10,00 <span class="rub">₽</span></div>
<div class="abs sg" style="top:471px"><b>35</b><svg width="14" height="10" viewBox="0 0 14 10"><path d="M0 0H1.100V8.900H14V10H0ZM2.600 5.600H4.200V8H2.600ZM5.400 2.400H7V8H5.400ZM8.200 4.200H9.800V8H8.200ZM11 1.200H12.600V8H11Z" fill="#3a3a50"/></svg></div>
<div class="abs cbn" style="top:471px"><svg width="15.500" height="12.500" viewBox="0 0 18.500 15" preserveAspectRatio="none"><path d="M0 .3h3.200l.8 1.700h14v6.200l-12 1.400.3 1.400h10.500v1.300H5L2.600 1.700H0z" fill="#3a3a3a"/><circle cx="5.600" cy="13.600" r="1.400" fill="#3a3a3a"/><circle cx="15.200" cy="13.600" r="1.400" fill="#3a3a3a"/></svg></div>
<div class="abs qi" style="top:471px"></div>
<div class="td" style="left:1675px;top:471px">4690000000009</div>
<svg class="abs" style="left:1776.500px;top:476.2px" width="12.500" height="10" viewBox="0 0 12.500 10"><path d="M2 3.800L4.700 6.300L10.500 .200L12.500 2.100L4.700 10L0 5.700Z" fill="#1f5a3d"/></svg>
<svg class="abs" style="left:282px;top:537px" width="13.500" height="12.500" viewBox="0 0 13.500 12.500"><path d="M5.200 0H8.300V3.600H10.800L6.750 7.800L2.700 3.600H5.200ZM0 8.400H3.600L5.400 10.200H8.100L9.900 8.400H13.500V12.500H0ZM10.400 10.600V11.400H11.200V10.600ZM11.800 10.600V11.400H12.600V10.600Z" fill-rule="evenodd" fill="#337ab7"/></svg>
<div class="abs" style="left:1785px;top:537.700px;font-size:12px;line-height:15px;color:#8a8a8a;white-space:nowrap"><b style="color:#77718f">1</b> - 7 из 7</div>
<div class="abs" style="left:1845px;top:535.500px;width:24px;height:16px;background:#5b9bd5;border-radius:2px 0 0 2px;color:#fff;font-size:12px;line-height:16px;text-align:center">25</div>
<div class="abs" style="left:1869px;top:535.500px;width:23px;height:16px;background:#f5f5f5;border:1px solid #ddd;border-left:0;border-radius:0 2px 2px 0;color:#333;font-size:12px;line-height:14px;text-align:center">50</div>
<div class="panel" id="p3"></div>
<svg class="abs" style="left:1872.300px;top:596.800px" width="14" height="13.300" viewBox="0 0 14 14" preserveAspectRatio="none"><path d="M2.400 0L7 4.600L11.600 0L14 2.400L9.400 7L14 11.600L11.600 14L7 9.400L2.400 14L0 11.600L4.600 7L0 2.400Z" fill="#5f626d"/></svg>
<svg class="abs" id="thumb" style="left:363px;top:615px" width="278" height="169" viewBox="0 0 278 169"><rect width="278" height="169" rx="2" fill="#ececee"/><rect width="278" height="8.200" rx="2" fill="#ececef"/><rect y="2" width="278" height="6.200" fill="#ececef"/><circle cx="4.300" cy="4" r="1" fill="#e8635a"/><circle cx="7.200" cy="4" r="1" fill="#e9b23c"/><circle cx="10.100" cy="4" r="1" fill="#5fbf52"/><rect x="17" y="1.800" width="7" height="5" rx="1" fill="#dcdcdf"/><rect x="35" y="1.800" width="7" height="5" rx="1" fill="#cfe0f5"/><rect y="8.200" width="278" height="9" fill="#f6f6f7"/><rect x="30" y="9.600" width="214" height="5.800" rx="2.900" fill="#dedfe2"/><rect x="37" y="11.700" width="78" height="1.400" fill="#9a9ba0"/><rect y="17.100" width="278" height="10.700" fill="#fff"/><rect x="9" y="18.600" width="5.500" height="8.200" rx="1" fill="#2f93e6"/><rect x="16" y="19.300" width="9.500" height="2.800" fill="#5bc4ea"/><rect x="15.500" y="23.300" width="28" height="3.200" fill="#3b97e8"/><path d="M56 22.400h3M65.500 22.400h2.600M75 22.400h3.400M184 22.400h3M194 22.400h3M204 22.400h2.600M212 22.400h10M234 22.400h17" stroke="#777a80" stroke-width="2"/><circle cx="231.500" cy="22.400" r="1.700" fill="#c9453a"/><circle cx="260.500" cy="22.600" r="2.800" fill="#2f8fe4"/><circle cx="272" cy="22.600" r="2.200" fill="none" stroke="#b9d6f3" stroke-width=".6"/><rect y="27.800" width="52.900" height="141.200" fill="#5b606c"/><rect y="38" width="52.900" height="10" fill="#4f5460"/><rect x="2" y="29.600" width="49" height="6.600" rx="1" fill="#555a66" stroke="#6d727d" stroke-width=".5"/><path d="M8 43.2h12M8 52.7h18M8 61.9h19M8 71.3h14M8 80.8h13M8 90h10M8 99.4h9M8 108.7h10M8 118.1h26M8 127.5h27M8 136.8h10M8 146.2h15M8 155.7h15" stroke="#c3c6cc" stroke-width="1.800"/><path d="M3.500 43.2h2.600M3.500 52.7h2.600M3.500 61.9h2.600M3.500 71.3h2.600M3.500 80.8h2.600M3.500 90h2.600M3.500 99.4h2.600M3.500 108.7h2.600M3.500 118.1h2.600M3.500 127.5h2.600M3.500 136.8h2.600M3.500 146.2h2.600M3.500 155.7h2.600" stroke="#b9bcc4" stroke-width="2"/><path d="M46.500 53.7l1-1l-1-1M46.500 72.3l1-1l-1-1M46.500 81.8l1-1l-1-1M46.500 91l1-1l-1-1M46.500 100.4l1-1l-1-1M46.500 109.7l1-1l-1-1M46.500 119.1l1-1l-1-1M46.500 156.7l1-1l-1-1" stroke="#c6c8ce" stroke-width=".6" fill="none"/><rect x="44" y="126" width="5" height="3" rx=".6" fill="#5cc47c"/><rect x="57" y="32.400" width="11" height="1.800" fill="#a9a7b6"/><rect x="56.900" y="39.200" width="218.200" height="9.600" rx="1" fill="#f8f8f8"/><rect x="60.500" y="42" width="15" height="4" fill="#fff" stroke="#ddd" stroke-width=".4"/><rect x="78" y="42" width="17" height="4" fill="#fff" stroke="#ddd" stroke-width=".4"/><path d="M62.500 44h11M80 44h13" stroke="#666" stroke-width="1.200"/><rect x="56.900" y="52.200" width="218.200" height="80.400" rx="1" fill="#fff"/><rect x="59.500" y="54.800" width="83" height="4.600" fill="#fff" stroke="#d8d8d8" stroke-width=".4"/><path d="M68 57h24" stroke="#bbb" stroke-width="1"/><path d="M145 57h44" stroke="#5b9bd5" stroke-width="1.300"/><path d="M108 69h14" stroke="#5b9bd5" stroke-width="1.300"/><path d="M177 69h9M190 66.500h9M190 69.300h11M211 66.500h9M211 69.300h14M233 66.500h9M233 69.300h15M256 69h3" stroke="#666" stroke-width="1.100"/><path d="M60.500 69h3M66 69h1M70 68h3" stroke="#999" stroke-width="1"/><path d="M60.500 75.9h3M66.500 75.9h1.200M70 75.9h3" stroke="#aaa" stroke-width=".9"/><rect x="77" y="74.4" width="3.400" height="3" fill="#933"/><path d="M108.500 75.9h44" stroke="#6aa3d8" stroke-width="1.300"/><rect x="178.500" y="74.3" width="6.500" height="3.200" rx=".6" fill="#ddd"/><path d="M190 75.9h14M211 75.9h14M233 75.9h14" stroke="#777" stroke-width="1.300"/><rect x="257.500" y="74.2" width="5.500" height="3.400" fill="#eee"/><rect x="264.500" y="74.2" width="5" height="3.400" fill="#e6e6e6"/><path d="M60.500 87h3M66.500 87h1.200M70 87h3" stroke="#aaa" stroke-width=".9"/><rect x="77" y="85.5" width="3.400" height="3" fill="#a44"/><path d="M108.500 85.2h43" stroke="#6aa3d8" stroke-width="1.300"/><path d="M108.500 88.8h45" stroke="#6aa3d8" stroke-width="1.300"/><rect x="178.500" y="85.4" width="6.500" height="3.200" rx=".6" fill="#ddd"/><path d="M190 87h14M211 87h14M233 87h14" stroke="#777" stroke-width="1.300"/><rect x="257.500" y="85.3" width="5.500" height="3.400" fill="#eee"/><rect x="264.500" y="85.3" width="5" height="3.400" fill="#e6e6e6"/><path d="M60.500 97.8h3M66.500 97.8h1.200M70 97.8h3" stroke="#aaa" stroke-width=".9"/><rect x="77" y="96.3" width="3.400" height="3" fill="#444"/><path d="M108.500 97.8h37" stroke="#6aa3d8" stroke-width="1.300"/><rect x="178.500" y="96.2" width="6.500" height="3.200" rx=".6" fill="#ddd"/><path d="M190 97.8h14M211 97.8h14M233 97.8h14" stroke="#777" stroke-width="1.300"/><rect x="257.500" y="96.1" width="5.500" height="3.400" fill="#eee"/><rect x="264.500" y="96.1" width="5" height="3.400" fill="#e6e6e6"/><path d="M60.500 105.5h3M66.500 105.5h1.200M70 105.5h3" stroke="#aaa" stroke-width=".9"/><rect x="77" y="104" width="3.400" height="3" fill="#b44"/><path d="M108.500 105.5h46" stroke="#6aa3d8" stroke-width="1.300"/><rect x="178.500" y="103.9" width="6.500" height="3.200" rx=".6" fill="#ddd"/><path d="M190 105.5h14M211 105.5h14M233 105.5h14" stroke="#777" stroke-width="1.300"/><rect x="257.500" y="103.8" width="5.500" height="3.400" fill="#eee"/><rect x="264.500" y="103.8" width="5" height="3.400" fill="#e6e6e6"/><path d="M60.500 116.3h3M66.500 116.3h1.200M70 116.3h3" stroke="#aaa" stroke-width=".9"/><rect x="77" y="114.8" width="3.400" height="3" fill="#333"/><rect x="178.500" y="114.7" width="6.500" height="3.200" rx=".6" fill="#ddd"/><path d="M190 116.3h14M211 116.3h14M233 116.3h14" stroke="#777" stroke-width="1.300"/><rect x="257.500" y="114.6" width="5.500" height="3.400" fill="#eee"/><rect x="264.500" y="114.6" width="5" height="3.400" fill="#e6e6e6"/><path d="M57.500 72.3h217M57.500 81.4h217M57.500 92.4h217M57.500 101.6h217M57.500 110.6h217" stroke="#f0f0f0" stroke-width=".5"/><path d="M60 128.500h13" stroke="#777" stroke-width="1.200"/><path d="M243 127.600h10" stroke="#aaa" stroke-width=".8"/><rect x="257" y="126" width="4.200" height="3.400" fill="#6aa3e0"/><rect x="262.500" y="126" width="3.400" height="3.400" fill="#e6e6e6"/><rect x="266.800" y="126" width="3.400" height="3.400" fill="#e6e6e6"/><circle cx="127.800" cy="77.300" r="33" fill="#fff" fill-opacity=".3"/><g opacity=".94"><g fill="none" stroke="#8aacf6"><path d="M160.500 110.500L186.800 136.800" stroke-width="19" stroke-linecap="round"/><circle cx="127.800" cy="77.300" r="39.300" stroke-width="13.500"/></g><path d="M122.500 58h10.700v14.300h14.300v9.400h-14.300v14.600h-10.700v-14.600h-14v-9.400h14z" fill="#8aacf6"/></g></svg>
<div class="abs" style="left:672px;top:632.100px;width:1200px;text-align:center;font-size:32px;line-height:35.200px;color:#333;white-space:nowrap">Это ваш Каталог</div>
<div class="abs" id="ptxt" style="left:672px;top:684.300px;width:1200px">Создайте вручную: <a>Категорию</a>, <a>Товар</a>, <a>Услугу</a>, <a>Составной товар</a> или <a>Шаблон</a>. Наполните каталог через <a>Импорт</a><br><a>таблицы</a> или через интеграции: с <a>ВК товары</a>, <a>Озон</a>, <a>Вайлдбериз</a>, <a>Яндекс.Маркет</a>, <a>1С</a>, <a>Эвотор</a>, <a>Т-банк (aQsi)</a>, или<br>закажите <a>автоматический парсинг</a> с любого сайта.</div>

<svg class="abs" style="left:796.500px;top:84.500px" width="14" height="20" viewBox="0 0 14 20"><path d="M.8.700V17.100L4.800 13.300L7.300 18.700L9.700 17.600L7.300 12.400L12.500 12Z" fill="#fff" stroke="#111" stroke-width="1" stroke-linejoin="round"/></svg>
</body>
</html>
